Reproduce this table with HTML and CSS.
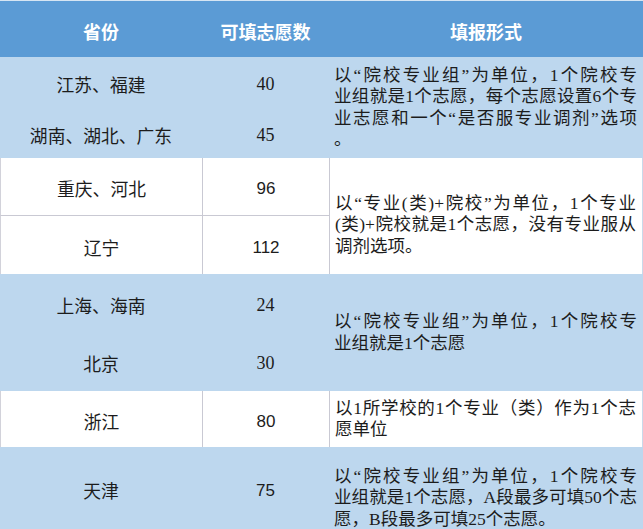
FILE: index.html
```html
<!DOCTYPE html>
<html lang="zh-CN">
<head>
<meta charset="utf-8">
<title>各省志愿填报形式</title>
<link rel="stylesheet" href="styles.css">
</head>
<body>
<div class="table">
  <div class="th">省份</div>
  <div class="th">可填志愿数</div>
  <div class="th">填报形式</div>

  <div class="td c1 blue">江苏、福建</div>
  <div class="td c2 blue serif">40</div>
  <div class="td c3 blue span2">
    <div class="para">
      <span class="ln full">以“院校专业组”为单位，1个院校专</span>
      <span class="ln full">业组就是1个志愿，每个志愿设置6个专</span>
      <span class="ln full">业志愿和一个“是否服专业调剂”选项</span>
      <span class="ln">。</span>
    </div>
  </div>
  <div class="td c1 blue">湖南、湖北、广东</div>
  <div class="td c2 blue serif">45</div>

  <div class="td c1 white top">重庆、河北</div>
  <div class="td c2 white top sans">96</div>
  <div class="td c3 white span2 down9">
    <div class="para">
      <span class="ln full">以“专业(类)+院校”为单位，1个专业</span>
      <span class="ln full">(类)+院校就是1个志愿，没有专业服从</span>
      <span class="ln">调剂选项。</span>
    </div>
  </div>
  <div class="td c1 white">辽宁</div>
  <div class="td c2 white sans">112</div>

  <div class="td c1 blue">上海、海南</div>
  <div class="td c2 blue serif">24</div>
  <div class="td c3 blue span2">
    <div class="para">
      <span class="ln full">以“院校专业组”为单位，1个院校专</span>
      <span class="ln">业组就是1个志愿</span>
    </div>
  </div>
  <div class="td c1 blue">北京</div>
  <div class="td c2 blue serif">30</div>

  <div class="td c1 white">浙江</div>
  <div class="td c2 white sans">80</div>
  <div class="td c3 white">
    <div class="para">
      <span class="ln full">以1所学校的1个专业（类）作为1个志</span>
      <span class="ln">愿单位</span>
    </div>
  </div>

  <div class="td c1 blue">天津</div>
  <div class="td c2 blue sans">75</div>
  <div class="td c3 blue down10">
    <div class="para">
      <span class="ln full">以“院校专业组”为单位，1个院校专</span>
      <span class="ln full">业组就是1个志愿，A段最多可填50个志</span>
      <span class="ln">愿，B段最多可填25个志愿。</span>
    </div>
  </div>
</div>
</body>
</html>
```

FILE: styles.css
```css
html, body {
  margin: 0;
  padding: 0;
  background: #ffffff;
}

.table {
  width: 643px;
  height: 529px;
  display: grid;
  grid-template-columns: 202px 127px 314px;
  grid-template-rows: 57px 51px 50px 58px 58px 58px 59px 56px 82px;
  font-family: "Liberation Serif", "Noto Sans CJK SC", serif;
  font-size: 17.5px;
  color: #1c1c1c;
  overflow: hidden;
}

.th {
  background: #5b9bd5;
  color: #ffffff;
  font-family: "Noto Sans CJK SC", sans-serif;
  font-weight: 700;
  font-size: 18px;
  display: flex;
  align-items: center;
  justify-content: center;
  padding-top: 3px;
  box-sizing: border-box;
  border-top: 1px solid #d6e5f3;
}

.td {
  box-sizing: border-box;
  display: flex;
  align-items: center;
  justify-content: center;
  line-height: 21px;
}

.c1, .c2 {
  padding-top: 4px;
}

.c1 {
  font-family: "Noto Sans CJK SC", sans-serif;
  font-size: 17.8px;
}

.serif {
  font-family: "Liberation Serif", serif;
  font-size: 18px;
}

.sans {
  font-family: "Liberation Sans", sans-serif;
  font-size: 17px;
}

.blue {
  background: #bdd7ee;
}

.white {
  background: #ffffff;
}

.white.c1 {
  border-left: 1px solid #d2d2da;
}

.white.c2,
.white.c3 {
  border-left: 1px solid #c9c9d3;
}

.white.c3 {
  border-right: 1px solid #c9d9ea;
}

.white.top {
  border-bottom: 1px solid #c9c9d3;
}

.c3 {
  justify-content: flex-start;
  padding: 0 6px 0 5px;
}

.span2 {
  grid-row: span 2;
}

.down9 {
  padding-top: 18px;
}

.down10 {
  padding-top: 20px;
}

.para {
  width: 100%;
}

.ln {
  display: block;
  line-height: 21.5px;
  text-align: left;
}

.ln.full {
  text-align: justify;
  text-align-last: justify;
}
```
